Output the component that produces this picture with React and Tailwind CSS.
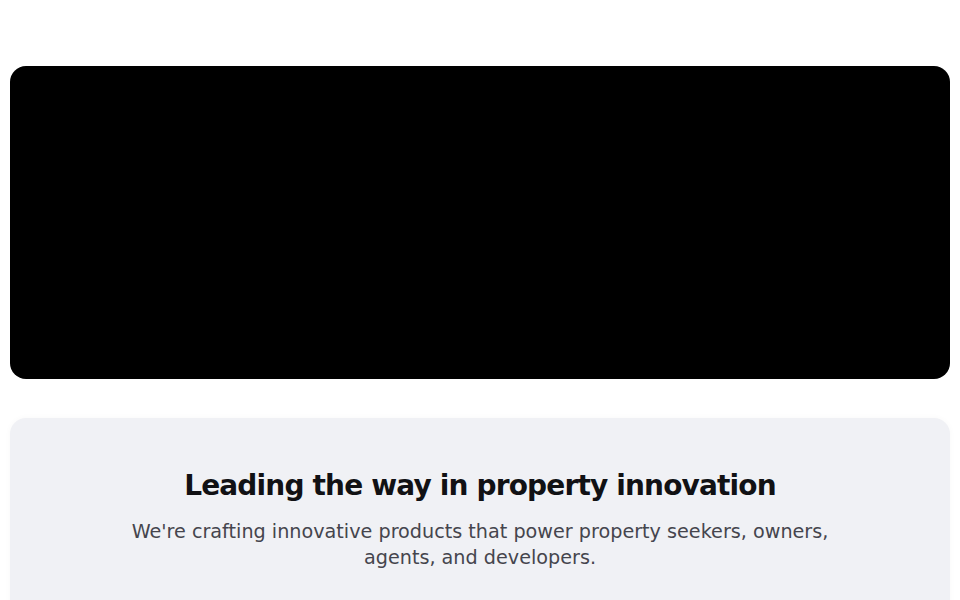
export default function App() {
  return (
    <div className="min-h-screen bg-white" style={{ fontFamily: '"DejaVu Sans", sans-serif' }}>
      <div className="px-[10px] pt-[66px]">
        <div className="h-[313px] w-full rounded-[16px] bg-black" />
        <div className="mt-[39px] rounded-[16px] bg-[#f0f1f5] px-8 pt-[50px] pb-16 shadow-[0_0_6px_rgba(0,0,0,0.03)]">
          <h2 className="text-center text-[28px] font-bold leading-[36px] tracking-[-0.03em] text-[#111114]">
            Leading the way in property innovation
          </h2>
          <p className="mx-auto mt-[15px] max-w-3xl text-center text-[19.2px] leading-[26px] text-[#45454d]">
            We're crafting innovative products that power property seekers, owners, agents, and developers.
          </p>
        </div>
      </div>
    </div>
  );
}
